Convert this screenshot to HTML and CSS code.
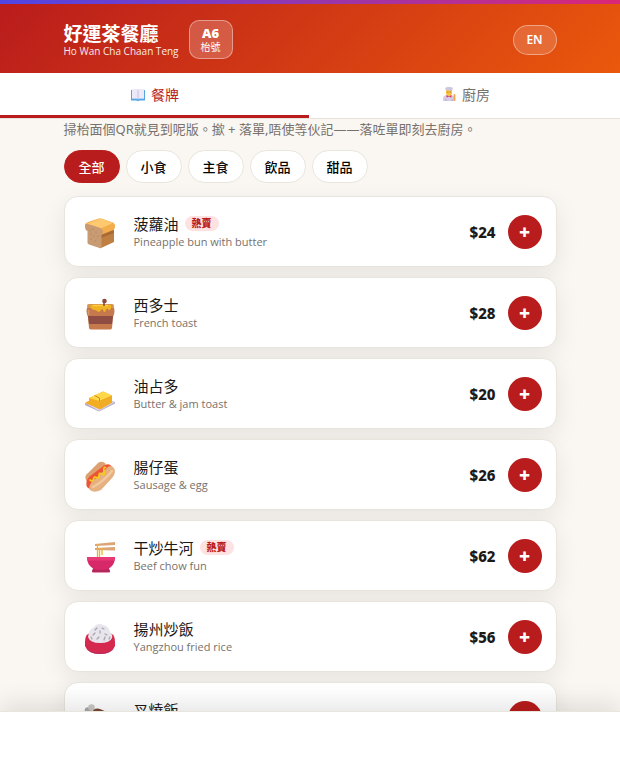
FILE: index.html
```html
<!DOCTYPE html>
<html lang="zh-HK">
<head>
  <meta charset="UTF-8">
  <meta name="viewport" content="width=device-width, initial-scale=1.0">
  <title>好運茶餐廳</title>
  <link rel="stylesheet" href="styles.css">
</head>
<body>
  <div class="rainbow"></div>
  <header class="top">
    <div class="wrap top-row">
      <div class="brand">
        <h1>好運茶餐廳</h1>
        <p>Ho Wan Cha Chaan Teng</p>
      </div>
      <div class="table-no"><b>A6</b><span>枱號</span></div>
      <button type="button" class="lang">EN</button>
    </div>
  </header>

  <nav class="tabs">
    <button type="button" class="tab active">
      <svg class="tab-icon" viewBox="0 0 16 16" aria-hidden="true">
        <path d="M1 4h14v10.500H9.500l-1.500.7-1.500-.7H1z" fill="#55a5e5"/>
        <path d="M2 3h5l1 .8 1-.8h5v9.500H9L8 13l-1-.5H2z" fill="#eee9f8"/>
        <path d="M7.500 3.400l.5.4.5-.4v9.300L8 13l-.5-.3z" fill="#c9c2dc"/>
        <path d="M2 12.500h5l1 .6 1-.6h5" fill="none" stroke="#b9d8f3" stroke-width=".7"/>
      </svg>
      餐牌
    </button>
    <button type="button" class="tab">
      <svg class="tab-icon" viewBox="0 0 16 16" aria-hidden="true">
        <path d="M2 15v-2.500Q2 9.500 5.500 9h4.500Q13.500 9.500 13.500 12.500V15z" fill="#d5cce8"/>
        <path d="M5 4h6v3.500Q10.500 10 8 10T5 7.500z" fill="#fbc33c"/>
        <path d="M4.800 4.500L4.300 2.500Q4.500 1 6 1.300Q8 .3 10 1.300Q11.800 1 11.700 2.600L11.200 4.500z" fill="#cdc6dd"/>
        <path d="M5.500 9l2.500 1.600L10.500 9v2.500L8 10.800l-2.500.7z" fill="#d93657"/>
        <path d="M13.500 9v5" stroke="#f3a34b" stroke-width="1.800" stroke-linecap="round"/>
        <path d="M6.500 6h.8M8.800 6h.8" stroke="#6b4528" stroke-width=".9"/>
        <path d="M4.800 15v-2M11.200 15v-2" stroke="#a89bc7" stroke-width=".7"/>
      </svg>
      廚房
    </button>
  </nav>

  <main class="wrap">
    <p class="hint">掃枱面個QR就見到呢版。撳 + 落單,唔使等伙記——落咗單即刻去廚房。</p>

    <div class="chips">
      <button type="button" class="chip on">全部</button>
      <button type="button" class="chip">小食</button>
      <button type="button" class="chip">主食</button>
      <button type="button" class="chip">飲品</button>
      <button type="button" class="chip">甜品</button>
    </div>

    <ul class="menu">
      <li class="item">
        <svg class="pic" viewBox="0 0 32 32" aria-hidden="true">
          <path d="M17 13l13-4v16l-13 6z" fill="#bf7f43"/>
          <path d="M17 17l13-4v3l-13 5z" fill="#a96a38"/>
          <path d="M1 8Q1 6 4 5L14 1.700Q16 1 18 1.700L29 5.500Q31.500 7 31 10.500Q30.500 13 28 13.500L18 17.500z" fill="#f3ad4c"/>
          <path d="M2 7L15 2q1.500-.5 3 0l11 4-12.500 5.500z" fill="#ffc970"/>
          <path d="M1 8Q1.500 6.500 4 7l11 3.500Q19 12 19 15q0 2-1.500 3v13q-1 .5-2 0L5 27.500Q3.500 27 3.500 25.500V14Q1 13 1 10z" fill="#c99b73"/>
          <g fill="#a9794f"><circle cx="6" cy="13" r=".6"/><circle cx="9" cy="12" r=".6"/><circle cx="12" cy="15" r=".6"/><circle cx="7" cy="17" r=".6"/><circle cx="10" cy="19" r=".6"/><circle cx="14" cy="19" r=".6"/><circle cx="7" cy="22" r=".6"/><circle cx="11" cy="24" r=".6"/></g>
        </svg>
        <div class="info">
          <h2>菠蘿油 <span class="hot">熱賣</span></h2>
          <p>Pineapple bun with butter</p>
        </div>
        <span class="price">$24</span>
        <button type="button" class="add" aria-label="加 菠蘿油">+</button>
      </li>
      <li class="item">
        <svg class="pic" viewBox="0 0 32 32" aria-hidden="true">
          <path d="M4 8h25Q32 13 29 19l-1 11q-.3 1.500-2 1.500H7q-1.700 0-2-1.500L4 19Q1 13 4 8z" fill="#c5794d"/>
          <path d="M4 18h25l-1 8H5z" fill="#8f4c42"/>
          <path d="M5 12q-1 3 0 5" fill="none" stroke="#d9966a" stroke-width="1.500"/>
          <rect x="3" y="6" width="27" height="4" rx="2" fill="#d4944d"/>
          <path d="M7 7h20v3q0 2-1.500 2T24 11q-1.500-1-2 1t-1.500 2-1.500-2-2 0-2 2-2-1-2-1-1 0-2-1-2-4z" fill="#efb323"/>
          <path d="M9 7.500h15" stroke="#ffcf43" stroke-width="1.500"/>
          <path d="M20 3v5" stroke="#7a4637" stroke-width="1.500"/>
          <circle cx="20.500" cy="3" r="2.300" fill="#8b4a3e"/>
        </svg>
        <div class="info">
          <h2>西多士</h2>
          <p>French toast</p>
        </div>
        <span class="price">$28</span>
        <button type="button" class="add" aria-label="加 西多士">+</button>
      </li>
      <li class="item">
        <svg class="pic" viewBox="0 0 32 32" aria-hidden="true">
          <path d="M1 24l16-6 14 5v1.500L15 32.500 1 26z" fill="#b5a7ca"/>
          <path d="M1 24l16-6 14 5-16 9z" fill="#ddd3e8"/>
          <path d="M5 19l14-6.500 9 4v7l-12 7-11-5z" fill="#f3ad22"/>
          <path d="M5 19l14-6.500 9 4L15.500 22z" fill="#ffd84a"/>
          <path d="M15.500 22L28 16.500v7L16 30z" fill="#efac24"/>
          <path d="M10.500 16.500l5 2.500v3" fill="none" stroke="#cf8c19" stroke-width="1"/>
          <path d="M2 23l3-1 1 3-3 1z" fill="#f2ac24"/>
        </svg>
        <div class="info">
          <h2>油占多</h2>
          <p>Butter &amp; jam toast</p>
        </div>
        <span class="price">$20</span>
        <button type="button" class="add" aria-label="加 油占多">+</button>
      </li>
      <li class="item">
        <svg class="pic" viewBox="0 0 32 32" aria-hidden="true">
          <path d="M2 20Q0 16 4 13L14 3q4-3 8 1L5 25z" fill="#dda171"/>
          <path d="M3 27Q1 22 5 17L20 5.500Q26 2.500 28 7L11 29q-4 2-8-2z" fill="#ed5435"/>
          <path d="M5 29q0-6 7-11L24 7q4-2.500 6.500 2 1.500 4-2 8.500L17 30Q9 34 5 29z" fill="#e7b080"/>
          <path d="M9 27Q19 22 28 11" fill="none" stroke="#f2c89f" stroke-width="2.500" stroke-linecap="round"/>
          <path d="M6 20q3 2 3.500-1t3-1.500 2.500-2 3-1.500 2-2.500 1.500-4" fill="none" stroke="#f8cc19" stroke-width="1.700" stroke-linecap="round"/>
        </svg>
        <div class="info">
          <h2>腸仔蛋</h2>
          <p>Sausage &amp; egg</p>
        </div>
        <span class="price">$26</span>
        <button type="button" class="add" aria-label="加 腸仔蛋">+</button>
      </li>
      <li class="item">
        <svg class="pic" viewBox="0 0 32 32" aria-hidden="true">
          <path d="M11 3L31 1v3L11 5zM11 7l20-1v3.500L11 9z" fill="#dca575"/>
          <path d="M13.500 3v14M15.500 7v10M18 7v7" fill="none" stroke="#efb521" stroke-width="1.300"/>
          <path d="M3 16h28q0 8-6 11.500l1 3q0 1-1 1H9q-1 0-1-1l1-3Q3 24 3 16z" fill="#d72869"/>
          <path d="M3 16h28q0 2-.5 3.500h-27z" fill="#e83a75"/>
          <path d="M9 28q8 2 16 0l1 3H8z" fill="#b3275c"/>
        </svg>
        <div class="info">
          <h2>干炒牛河 <span class="hot">熱賣</span></h2>
          <p>Beef chow fun</p>
        </div>
        <span class="price">$62</span>
        <button type="button" class="add" aria-label="加 干炒牛河">+</button>
      </li>
      <li class="item">
        <svg class="pic" viewBox="0 0 32 32" aria-hidden="true">
          <path d="M4 12q12-7 24 0 3 2 3 8v4q-3 8-15 8T1 24v-4q0-6 3-8z" fill="#d5294d"/>
          <path d="M1.500 23q3 8 14.500 8t14.500-8q-2 9-14.500 9T1.500 23z" fill="#b72960"/>
          <path d="M4 15q1-8 6-10l2-2q4-2 7 0 6 1 7 7 3 3 2 6-2 5-12 5T4 15z" fill="#e9e5ed"/>
          <path d="M11 8l2-2M18 6l2 1M9 13l2-2M16 11v-2M21 12l2 1M13 17l2-2M20 18l1-3M8 17l-1-2M25 17l1-2" stroke="#aaa4b1" stroke-width="1.300" stroke-linecap="round"/>
        </svg>
        <div class="info">
          <h2>揚州炒飯</h2>
          <p>Yangzhou fried rice</p>
        </div>
        <span class="price">$56</span>
        <button type="button" class="add" aria-label="加 揚州炒飯">+</button>
      </li>
      <li class="item">
        <svg class="pic" viewBox="0 0 32 32" aria-hidden="true">
          <path d="M4 7l25 19" stroke="#c9c7c5" stroke-width="4"/>
          <circle cx="4" cy="7.500" r="3.300" fill="#aaa8a6"/>
          <circle cx="7.500" cy="4.500" r="3.300" fill="#cac8c6"/>
          <path d="M7 11q3-7 9-5 14 5 15 13 0 9-10 9Q7 27 7 11z" fill="#794832"/>
        </svg>
        <div class="info">
          <h2>叉燒飯</h2>
          <p>BBQ pork rice</p>
        </div>
        <span class="price">$52</span>
        <button type="button" class="add" aria-label="加 叉燒飯">+</button>
      </li>
    </ul>
  </main>

  <footer class="cart-bar"></footer>
</body>
</html>
```
FILE: styles.css
```css
* { margin: 0; padding: 0; box-sizing: border-box; }
html { scrollbar-width: none; }
body { background: #faf7f2; color: #1c1917; font-family: "Noto Sans", "Noto Sans CJK TC", sans-serif; font-size: 13px; padding-bottom: 84px; }
button { font-family: inherit; cursor: pointer; }
.wrap { max-width: 521px; margin: 0 auto; padding: 0 14px; }

/* header */
.rainbow { height: 4px; background: linear-gradient(90deg, #4f46e5, #db2777); }
.top { background: linear-gradient(135deg, #b91c1c, #ea580c); color: #fff; padding: 16px 0 14px; }
.top-row { display: flex; align-items: center; gap: 10px; }
.brand h1 { font-size: 19px; line-height: 22px; font-weight: 700; }
.brand p { font-size: 10px; line-height: 12px; opacity: .9; font-family: "Open Sans", sans-serif; }
.table-no { display: flex; flex-direction: column; align-items: center; padding: 5px 11px; background: rgba(255,255,255,.2); border: 1px solid rgba(255,255,255,.4); border-radius: 10px; }
.table-no b { font-size: 13px; line-height: 15px; font-weight: 900; }
.table-no span { font-size: 10px; line-height: 12px; }
.lang { margin-left: auto; width: 44px; height: 30px; background: rgba(255,255,255,.16); border: 1px solid rgba(255,255,255,.4); border-radius: 999px; color: #fff; font-size: 12px; font-weight: 600; }

/* tabs */
.tabs { display: flex; gap: 2px; background: #fff; border-bottom: 1px solid #e7e2da; }
.tab { flex: 1; display: flex; align-items: center; justify-content: center; gap: 5px; height: 45px; background: none; border: 0; border-bottom: 3px solid transparent; color: #78716c; font-size: 14px; font-weight: 400; }
.tab.active { color: #b91c1c; border-bottom-color: #b91c1c; }
.tab-icon { width: 16px; height: 16px; }

.hint { color: #78716c; font-size: 13px; line-height: 20px; padding-bottom: 11px; }
.chips { display: flex; gap: 6px; margin-bottom: 13px; }
.chip { height: 33px; padding: 0 14px; background: #fff; border: 1px solid #e7e5dc; border-radius: 999px; font-size: 13px; font-weight: 500; color: #000; }
.chip.on { background: #b91c1c; border-color: #b91c1c; color: #fff; }

/* menu */
.menu { list-style: none; display: grid; gap: 10px; }
.item { display: flex; align-items: center; gap: 12px; min-height: 71px; padding: 12px 14px 12px 13px; background: #fff; border: 1px solid #e7e5dc; border-radius: 14px; box-shadow: 0 8px 24px rgba(28,25,23,.08); }
.pic { width: 44px; height: 34px; padding: 2px 6px 0; overflow: visible; }
.info { flex: 1; }
.info h2 { display: flex; align-items: center; gap: 6px; font-size: 15px; line-height: 20px; font-weight: 400; }
.info p { font-size: 11px; line-height: 16px; color: #78716c; font-family: "Open Sans", sans-serif; }
.hot { padding: 0 7px; background: #fee2e2; border-radius: 999px; color: #b91c1c; font-size: 10px; line-height: 15px; font-weight: 800; }
.price { font-size: 15px; font-weight: 800; }
.add { width: 34px; height: 34px; background: #b91c1c; border: 0; border-radius: 50%; color: #fff; font-size: 19px; line-height: 34px; font-weight: 900; }

.cart-bar { position: fixed; left: 0; right: 0; bottom: 0; height: 69px; background: #fff; border-top: 1px solid #e7e5dc; box-shadow: 0 -8px 24px rgba(0,0,0,.1); }
```
